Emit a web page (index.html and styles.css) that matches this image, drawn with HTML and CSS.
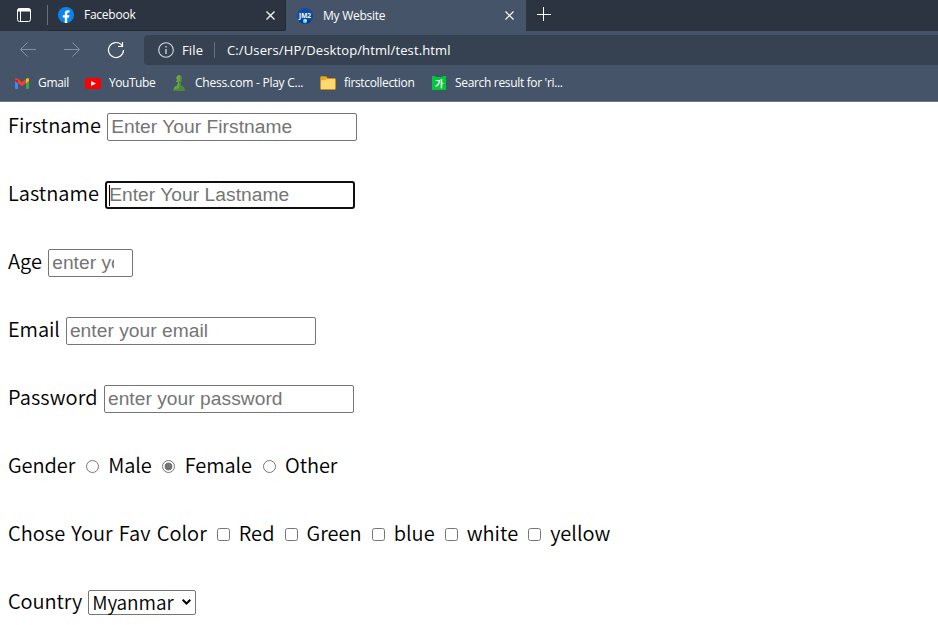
FILE: index.html
```html
<!DOCTYPE html>
<html lang="en">
<head>
<meta charset="utf-8">
<title>My Website</title>
<link rel="stylesheet" href="styles.css">
</head>
<body>
<header class="browser">
  <div class="tabs">
    <div class="tab-menu"><svg width="16" height="16" viewBox="0 0 16 16"><rect x="1.5" y="1.5" width="13" height="13" rx="2" fill="none" stroke="#fff"/><path d="M1.5 4.5V3q0-1.5 1.5-1.5h10q1.500 0 1.500 1.500v1.500z" fill="#fff"/><path d="M4.500 4v10.500" stroke="#fff"/></svg></div>
    <div class="tab tab-back">
      <svg width="16" height="16" viewBox="0 0 16 16"><circle cx="8" cy="8" r="8" fill="#0b83ee"/><path d="M6.800 16v-5.500h-2V8.200h2V6.500c0-2 1.100-3.200 3-3.200l1.700.2v1.900h-1c-1 0-1.300.6-1.300 1.200v1.600h2.200l-.4 2.300H9.200V16z" fill="#fff"/></svg>
      <span class="tab-title">Facebook</span>
      <svg class="close" width="9" height="9" viewBox="0 0 9 9"><path d="M.5.5l8 8m0-8l-8 8" stroke="#fff" stroke-width="1.200"/></svg>
    </div>
    <div class="tab tab-front">
      <svg width="16" height="16" viewBox="0 0 16 16"><circle cx="8" cy="8" r="8" fill="#0d4da4"/><path d="M2 13q6-3 12 0a8 8 0 0 1-12 0" fill="#09397d"/><text x="8" y="9.500" class="logo-text">JM2</text><circle cx="8" cy="13" r="2.200" fill="#64c7d0"/><path d="M7 12l2-.7.500 1.700-1 1z" fill="#d5efdc"/></svg>
      <span class="tab-title">My Website</span>
      <svg class="close" width="9" height="9" viewBox="0 0 9 9"><path d="M.5.5l8 8m0-8l-8 8" stroke="#fff" stroke-width="1.200"/></svg>
    </div>
    <svg class="plus" width="14" height="14" viewBox="0 0 14 14"><path d="M0 7.500h14M6.500 0v14" stroke="#fff"/></svg>
  </div>
  <div class="toolbar">
    <svg class="nav-icon" width="16" height="16" viewBox="0 0 16 16"><path d="M16 8.500H.8M7.500 1.500l-7 7 7 7" fill="none" stroke="#8591a0"/></svg>
    <svg class="nav-icon forward" width="16" height="16" viewBox="0 0 16 16"><path d="M0 8.500h15.200M8.500 1.500l7 7-7 7" fill="none" stroke="#8591a0"/></svg>
    <svg class="nav-icon reload" width="18" height="18" viewBox="0 0 18 18"><path d="M16.500 9a7.500 7.500 0 1 1-2.200-5.300L15.500 5M15.500 1v4.500H11" fill="none" stroke="#fff" stroke-width="1.200"/></svg>
    <div class="address">
      <svg width="16" height="16" viewBox="0 0 16 16"><circle cx="8" cy="8" r="7.300" fill="none" stroke="#d5d9df" stroke-width="1.100"/><path d="M8 7v5M8 4v1.500" stroke="#d5d9df" stroke-width="1.300"/></svg>
      <span class="scheme">File</span>
      <span class="url">C:/Users/HP/Desktop/html/test.html</span>
    </div>
  </div>
  <nav class="bookmarks">
    <a class="bm gmail"><svg width="14" height="11" viewBox="0 0 14 11"><path d="M0 1.500v8.500q0 1 1 1h2V4z" fill="#4285f4"/><path d="M11 4v7h2q1 0 1-1V1.500z" fill="#34a853"/><path d="M11 1l1-.7Q14-.5 14 1.800V3l-3 2.300z" fill="#fbbc04"/><path d="M0 3V1.800Q0-.5 2 .3L7 4l4-3v4.300L7 8.300 3 5.300z" fill="#ea4335"/><path d="M0 3V1.500L3 2v3.300z" fill="#c5221f"/></svg><span>Gmail</span></a>
    <a class="bm youtube"><svg width="16" height="11" viewBox="0 0 16 11"><rect width="16" height="11" rx="2.500" fill="#f00"/><path d="M6 3l5 2.500L6 8z" fill="#fff"/></svg><span>YouTube</span></a>
    <a class="bm chess"><svg width="12" height="16" viewBox="0 0 12 16"><path d="M.5 15.500Q.3 12 4 10.500L5 7H3V6l1.500-.8a2.700 2.700 0 1 1 3 0L9 6v1H7l1 3.500q3.700 1.500 3.500 5z" fill="#66a83f"/><path d="M7.500.9q2.500 2 0 4.300L9 6v1H7l1 3.500q3.700 1.500 3.500 5H.5v-1.500q6 .5 6-3L6 7l1-2z" fill="#4b8a37"/></svg><span>Chess.com - Play C...</span></a>
    <a class="bm folder"><svg width="16" height="14" viewBox="0 0 16 14"><path d="M.5 12.500V1.500q0-1 1-1H6l1.500 2h7q1 0 1 1v9q0 1-1 1h-13q-1 0-1-1" fill="#ffd773" stroke="#c78f18"/><path d="M1 1h5l1 1.500-1.500 1.700H1z" fill="#e9a720"/></svg><span>firstcollection</span></a>
    <a class="bm search"><svg width="14" height="14" viewBox="0 0 14 14"><path d="M0 0h3l1 1h6l1-1h3v14H0z" fill="#04c63b"/><text x="7" y="10.500" class="ga">가</text></svg><span>Search result for 'ri...</span></a>
  </nav>
</header>
<form class="form">
  <div class="row">Firstname <input type="text" placeholder="Enter Your Firstname"></div>
  <div class="row">Lastname <span class="focus-field"><input class="focused" type="text" placeholder="Enter Your Lastname"><i class="caret"></i></span></div>
  <div class="row">Age <input class="age" type="number" placeholder="enter your age"></div>
  <div class="row email">Email <input type="email" placeholder="enter your email"></div>
  <div class="row password">Password <input type="password" placeholder="enter your password"></div>
  <div class="row gender">Gender <i class="radio"></i> Male <i class="radio on"></i> Female <i class="radio"></i> Other</div>
  <div class="row">Chose Your Fav Color <i class="check"></i> Red <i class="check"></i> Green <i class="check"></i> blue <i class="check"></i> white <i class="check"></i> yellow</div>
  <div class="row country">Country <span class="select">Myanmar<svg width="9" height="6" viewBox="0 0 9 6"><path d="M.7.8L4.500 4.500 8.300.8" fill="none" stroke="#000" stroke-width="2"/></svg></span></div>
</form>
</body>
</html>
```
FILE: styles.css
```css
* { box-sizing: border-box; }
html, body { margin: 0; height: 625px; overflow: hidden; background: #fff; }
svg { display: block; flex: none; }
.browser { height: 102px; background: #455468; color: #fff; font: 12px/16px "Open Sans", sans-serif; border-bottom: 1px solid #6d788b; }
.tabs { display: flex; height: 31px; background: #2b3440; }
.tab-menu { width: 48px; padding: 7px 0 0 16px; background: linear-gradient(#66707d, #66707d) 47px 5px / 1px 20px no-repeat; }
.tab { display: flex; align-items: center; }
.tab-back { width: 238px; padding: 0 10px; border-right: 1px solid #222a34; border-bottom: 1px solid #222a34; border-radius: 0 0 4px 0; }
.tab-front { width: 240px; padding: 0 12px 0 11px; background: #455468; }
.tab-title { margin-left: 10px; flex: 1; letter-spacing: -.25px; }
.plus { margin: 7px 0 0 11px; }
.logo-text { font: bold 6.500px "Open Sans", sans-serif; fill: #fff; text-anchor: middle; }
.toolbar { display: flex; height: 34px; padding: 4px 0 0 20px; }
.nav-icon { margin-top: 6px; }
.forward { margin-left: 28px; }
.reload { margin-left: 27px; }
.address { display: flex; align-items: center; flex: 1; height: 30px; margin-left: 19px; padding-left: 14px; background: #364251; border-radius: 4px 0 0 4px; font-size: 13px; letter-spacing: .12px; }
.scheme { width: 33px; margin-left: 8px; border-right: 1px solid #667180; }
.url { margin-left: 12px; }
.bookmarks { display: flex; height: 36px; align-items: center; padding-left: 15px; letter-spacing: -.33px; white-space: nowrap; }
.bm { display: flex; align-items: center; }
.bm span { margin-left: 9px; }
.gmail { width: 70px; }
.youtube { width: 88px; }
.youtube span { margin-left: 8px; letter-spacing: -.45px; }
.chess { width: 147px; }
.chess span { margin-left: 10px; letter-spacing: -.25px; }
.folder { width: 112px; }
.folder span { margin-left: 8px; }
.ga { font: bold 9px "Noto Sans CJK KR", sans-serif; fill: #fff; text-anchor: middle; }
.form { padding: 0 0 0 8px; color: #000; font: 20px/30px "Noto Sans CJK SC", sans-serif; letter-spacing: .03px; word-spacing: 1.700px; font-weight: 350; }
.row { display: block; height: 68px; padding-top: 8px; white-space: nowrap; }
.email, .gender, .country { letter-spacing: -.08px; }
.password { letter-spacing: .12px; }
input { display: inline-block; width: 250px; height: 28px; margin: 0; padding: 1px 3px; border: 1px solid #767676; border-radius: 2px; outline: none; background: #fff; font: 19.200px "Liberation Sans", sans-serif; letter-spacing: .04px; word-spacing: 0; }
input::placeholder { color: #757575; }
.age { width: 85px; }
.focus-field { display: inline-flex; position: relative; height: 28px; }
.focused { border: 2px solid #101010; border-radius: 3px; padding: 0 2px; }
.caret { position: absolute; left: 4px; top: 4px; width: 1px; height: 21px; background: #000; }
.radio, .check { display: inline-block; width: 13px; height: 13px; margin: 0 2.500px 0 4.100px; border: 1px solid #767676; background: #fff; vertical-align: 0; }
.radio { border-radius: 50%; margin: 0 3.200px 0 4.700px; }
.radio.on { background: radial-gradient(circle, #767676 0 3.700px, #fff 4.200px); }
.check { border-radius: 2.500px; }
.select { display: inline-flex; align-items: center; width: 108px; height: 25px; margin-left: -.500px; padding-left: 3.500px; border: 1px solid #767676; border-radius: 2px; line-height: 22px; font-size: 19px; letter-spacing: -.1px; vertical-align: -1px; }
.select svg { margin-left: auto; margin-right: 4px; }
```
